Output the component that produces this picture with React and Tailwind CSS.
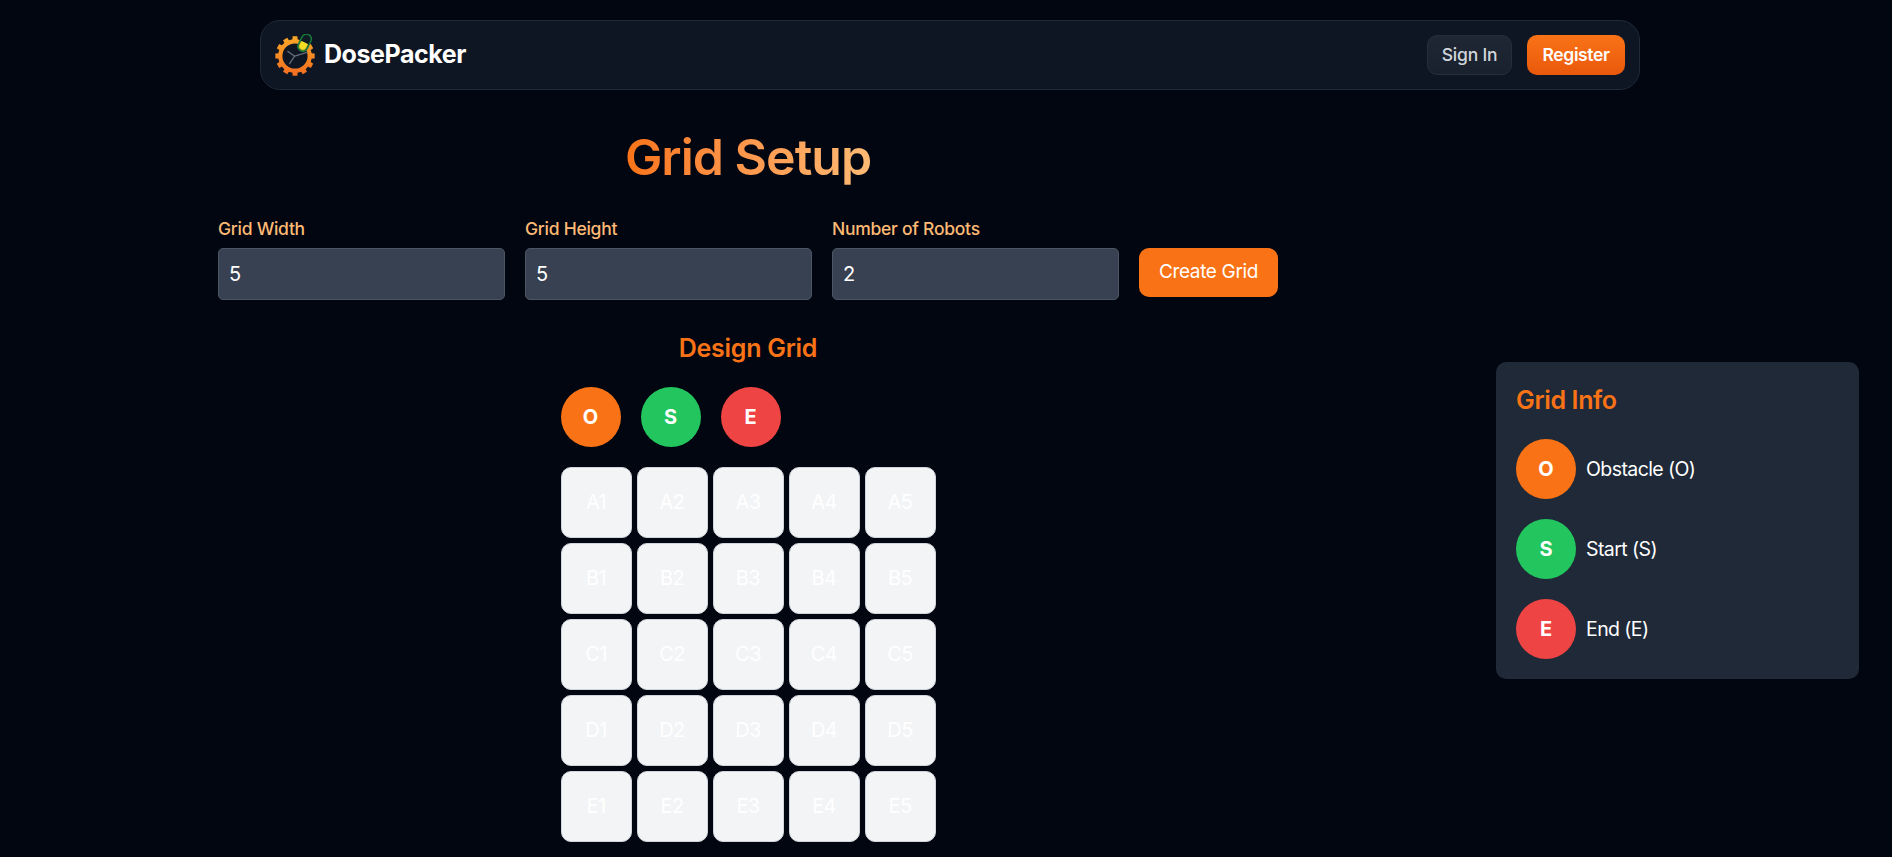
const markers = [
  { key: 'O', label: 'Obstacle (O)', color: 'bg-[#f97316]' },
  { key: 'S', label: 'Start (S)', color: 'bg-[#22c55e]' },
  { key: 'E', label: 'End (E)', color: 'bg-[#ef4444]' },
];

const fields = [
  { label: 'Grid Width', value: '5' },
  { label: 'Grid Height', value: '5' },
  { label: 'Number of Robots', value: '2' },
];

const rows = ['A', 'B', 'C', 'D', 'E'];
const cols = [1, 2, 3, 4, 5];
const teeth = [0, 30, 60, 90, 120, 150, 180, 210, 240, 270, 300, 330];

function Logo() {
  return (
    <svg viewBox="0 0 40 42" className="h-[42px] w-[40px]">
      <defs>
        <linearGradient id="gear" gradientUnits="userSpaceOnUse" x1="0" y1="2" x2="0" y2="42">
          <stop offset="0" stopColor="#f9a826" />
          <stop offset="1" stopColor="#f36c21" />
        </linearGradient>
      </defs>
      <circle cx="20" cy="22" r="14.7" fill="none" stroke="url(#gear)" strokeWidth="4.2" />
      <g fill="url(#gear)">
        {teeth.map((a) => {
          const point = (r, d) => {
            const t = ((a + d) * Math.PI) / 180;
            return `${(20 + r * Math.sin(t)).toFixed(2)},${(22 - r * Math.cos(t)).toFixed(2)}`;
          };
          return <polygon key={a} points={[point(15.5, -10), point(19.8, -7), point(19.8, 7), point(15.5, 10)].join(' ')} />;
        })}
      </g>
      <g stroke="#626b78" strokeWidth="1.3" strokeLinecap="round" fill="none">
        <path d="M19.6 22.2 L12.8 17.4" />
        <path d="M19.6 22.2 L32 18.4" />
        <path d="M19.6 22.2 L14.6 29.6" />
      </g>
      <g transform="rotate(27 29.6 8.7)">
        <rect x="24.7" y="-0.3" width="9.8" height="18" rx="4.9" fill="#101c24" stroke="#17803b" strokeWidth="1.4" />
        <path d="M25.6 8.8 H33.6 V12.8 A4 4 0 0 1 25.6 12.8 Z" fill="#a5b52a" />
        <path d="M26.2 8.4 H33 V12.4 A3.4 3.4 0 0 1 26.2 12.4 Z" fill="#f5dc25" />
      </g>
    </svg>
  );
}

function Marker({ marker }) {
  return (
    <div className={`flex size-[60px] items-center justify-center rounded-full text-[20px] leading-[30px] font-bold tracking-normal text-white ${marker.color}`}>
      {marker.key}
    </div>
  );
}

export default function App() {
  return (
    <div className="flex h-[857px] w-full flex-col overflow-hidden bg-[#020611] pt-[20px] font-['Inter',sans-serif] text-[20px] leading-[30px] text-white">
      <header className="ml-[260px] flex h-[70px] w-[1380px] shrink-0 items-center justify-between rounded-[20px] border border-[#1f2937] bg-[#0f1623] px-[14px]">
        <div className="flex items-center gap-[9px]">
          <Logo />
          <span className="pb-[2px] text-[25px] font-bold tracking-[-0.018em]">DosePacker</span>
        </div>
        <div className="flex gap-[15px] text-[17.5px] font-medium">
          <button className="h-[40px] w-[85px] rounded-[10px] border border-[#252e3b] bg-linear-to-b from-[#1f2735] to-[#19212e] tracking-[-0.012em] text-[#d1d5db]">Sign In</button>
          <button className="h-[40px] w-[98px] rounded-[10px] bg-linear-to-b from-[#f97316] to-[#ea580c] font-semibold tracking-[-0.022em]">Register</button>
        </div>
      </header>

      <div className="flex items-start">
        <main className="flex w-[1496px] flex-col items-center">
          <h1 className="mt-[37px] bg-linear-to-r from-[#f97316] to-[#fdba74] bg-clip-text text-[50px] leading-[60px] font-semibold tracking-[-0.02em] text-transparent">
            Grid Setup
          </h1>
          <form className="mt-[29px] flex gap-[20px]">
            {fields.map((f) => (
              <label key={f.label} className="flex w-[287px] flex-col">
                <span className="text-[17.5px] leading-[25px] font-medium tracking-[-0.015em] text-[#fdba74]">{f.label}</span>
                <input
                  readOnly
                  value={f.value}
                  className="mt-[7px] h-[52px] w-full rounded-[5px] border border-[#4b5563] bg-[#374151] px-[10px] text-white outline-none"
                />
              </label>
            ))}
            <button type="button" className="mt-[32px] h-[49px] w-[139px] rounded-[10px] bg-[#f97316] pb-[2px] text-[19px] tracking-[-0.018em]">
              Create Grid
            </button>
          </form>
          <h2 className="mt-[31px] text-[25px] leading-[35px] font-semibold tracking-[-0.011em] text-[#f97316]">Design Grid</h2>
          <div className="mt-[21px] flex flex-col gap-[20px]">
            <div className="flex gap-[20px]">
              {markers.map((m) => (
                <Marker key={m.key} marker={m} />
              ))}
            </div>
            <div className="grid grid-cols-[repeat(5,71px)] gap-[5px] tracking-[-0.03em]">
              {rows.map((r) =>
                cols.map((c) => (
                  <div key={r + c} className="flex h-[71px] items-center justify-center rounded-[10px] border border-[#d1d5db] bg-[#f3f4f6] pb-[2px] text-white">
                    {r}
                    {c}
                  </div>
                )),
              )}
            </div>
          </div>
        </main>

        <aside className="mt-[272px] h-[317px] w-[363px] rounded-[10px] bg-[#1f2937] p-[20px]">
          <h2 className="text-[25px] leading-[36px] font-semibold tracking-[-0.014em] text-[#f97316]">Grid Info</h2>
          <ul className="mt-[21px] flex flex-col gap-[20px]">
            {markers.map((m) => (
              <li key={m.key} className="flex items-center gap-[10px]">
                <Marker marker={m} />
                <span className="pb-px text-[19.5px] tracking-[-0.03em]">{m.label}</span>
              </li>
            ))}
          </ul>
        </aside>
      </div>
    </div>
  );
}
